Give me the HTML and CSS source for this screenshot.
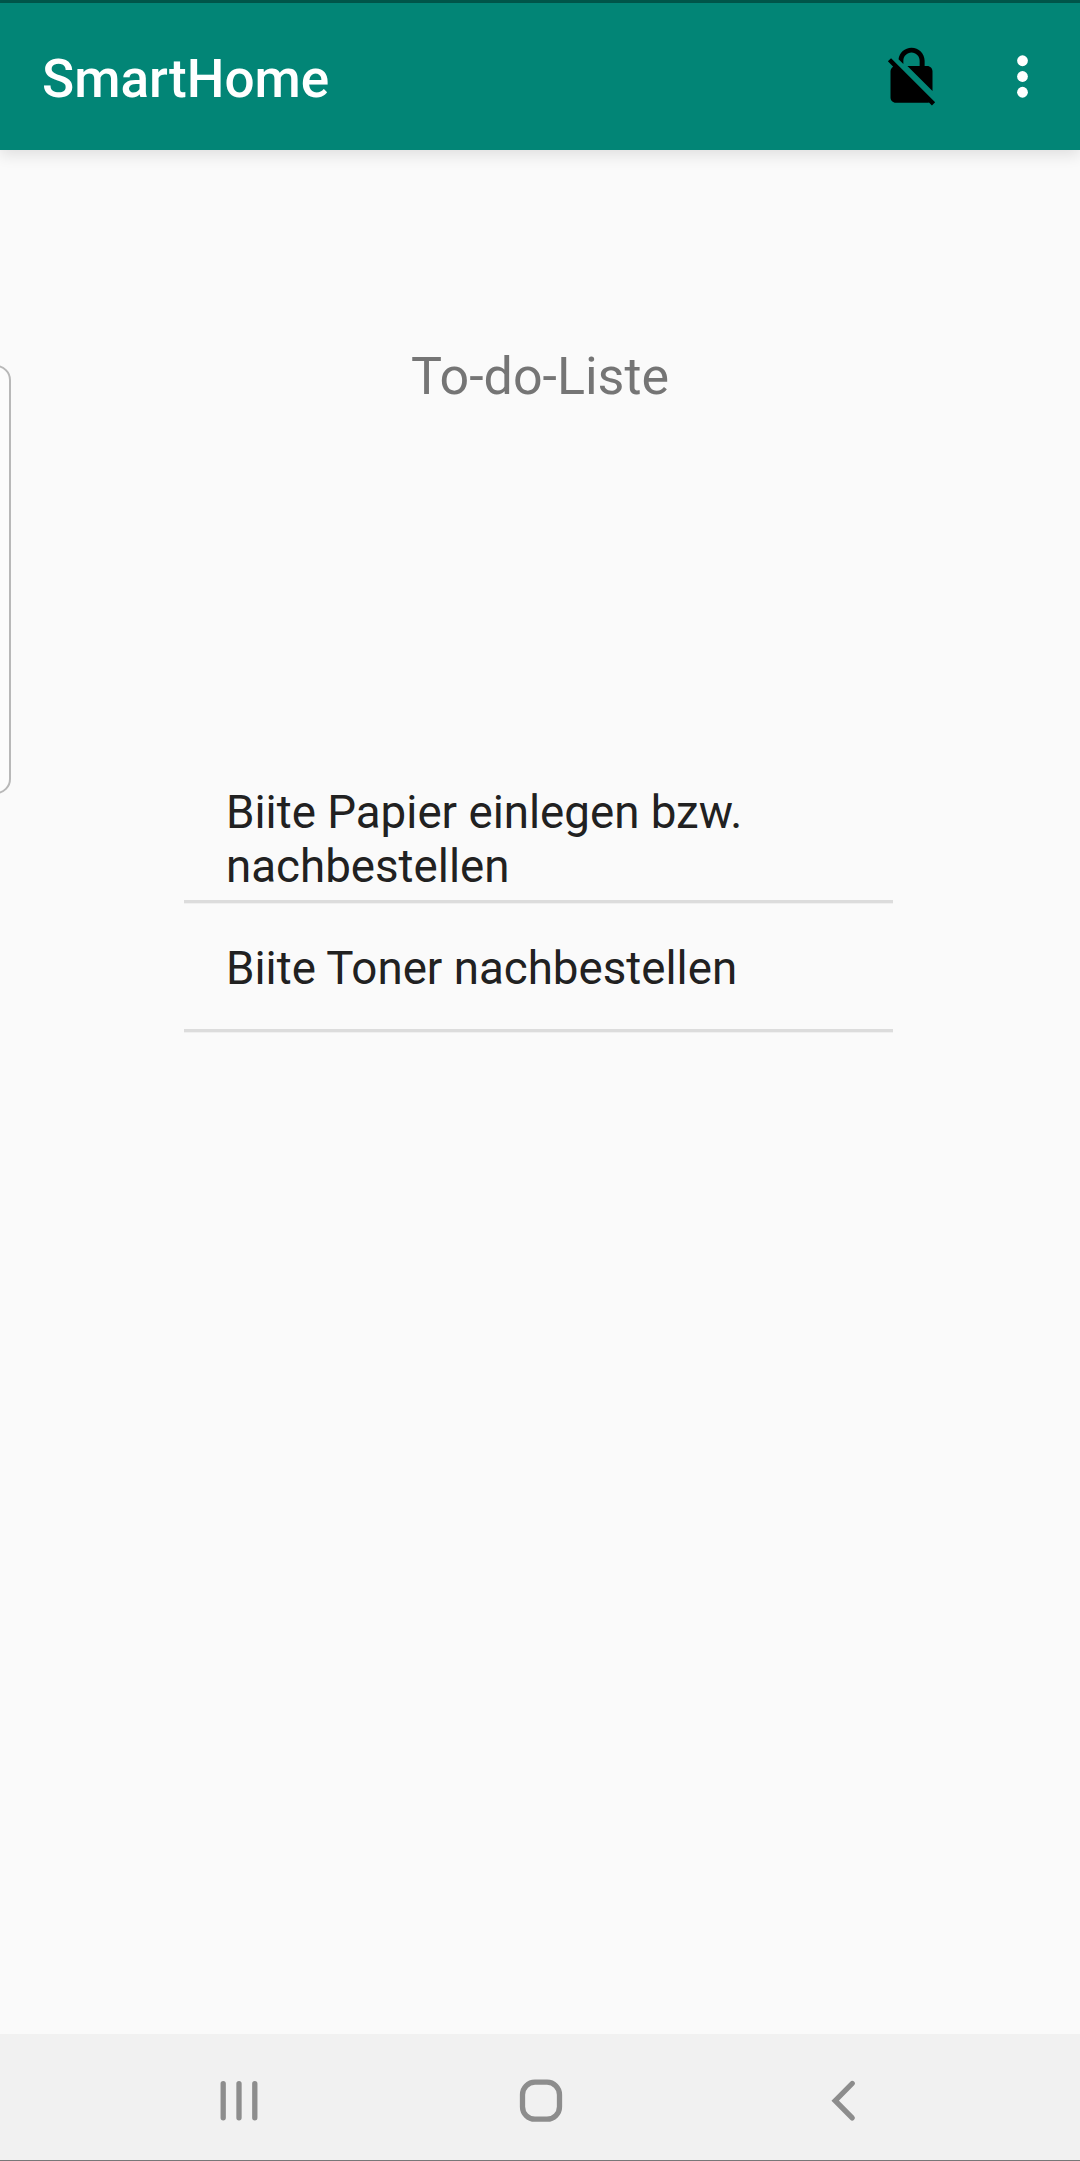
FILE: index.html
```html
<!DOCTYPE html>
<html lang="de">
<head>
<meta charset="utf-8">
<title>SmartHome</title>
<link rel="stylesheet" href="styles.css">
</head>
<body>
<div class="screen">
  <div class="status-strip"></div>
  <header class="app-bar">
    <h1 class="app-title">SmartHome</h1>
    <svg class="icon icon-lock" viewBox="0 0 24 24"><path d="M21 21.78L4.22 5 3 6.22l2.04 2.04C4.42 8.6 4 9.25 4 10v10c0 1.1.9 2 2 2h12c.23 0 .45-.05.66-.12L19.78 23 21 21.78zM8.9 6c0-1.71 1.39-3.1 3.1-3.1s3.1 1.39 3.1 3.1v2h-4.66L20 17.56V10c0-1.1-.9-2-2-2h-1V6c0-2.76-2.24-5-5-5-2.56 0-4.64 1.93-4.94 4.4L8.9 7.24V6z"/></svg>
    <svg class="icon icon-more" viewBox="0 0 24 24"><circle cx="12" cy="6" r="2.05"/><circle cx="12" cy="12" r="2.05"/><circle cx="12" cy="18" r="2.05"/></svg>
  </header>
  <main class="content">
    <h2 class="heading">To-do-Liste</h2>
    <ul class="todo">
      <li class="todo-item">Biite Papier einlegen bzw. nachbestellen</li>
      <li class="todo-item">Biite Toner nachbestellen</li>
    </ul>
  </main>
  <nav class="nav-bar">
    <svg class="nav-icon" viewBox="0 0 48 48"><path d="M8.2 6.6v34.2M24 6.6v34.2M39.8 6.6v34.2"/></svg>
    <svg class="nav-icon" viewBox="0 0 48 48"><rect x="5.5" y="5.2" width="37" height="37" rx="12.5"/></svg>
    <svg class="nav-icon" viewBox="0 0 48 48"><path d="M33.2 6.5L16.2 23.7l17 17.2"/></svg>
  </nav>
  <div class="edge-handle"></div>
</div>
</body>
</html>
```
FILE: styles.css
```css
* { box-sizing: border-box; }

body {
  margin: 0;
  background: #fafafa;
  font-family: Roboto, "Liberation Sans", sans-serif;
}

.screen {
  position: relative;
  display: flex;
  flex-direction: column;
  height: 2161px;
  overflow: hidden;
}

.status-strip {
  height: 3px;
  background: #00574b;
}

.app-bar {
  display: flex;
  align-items: center;
  height: 147px;
  padding: 0 26px 0 42px;
  background: #028576;
  box-shadow: 0 5px 14px rgba(0, 0, 0, 0.11);
}

.app-title {
  flex: 1;
  margin: 5px 0 0;
  color: #fff;
  font-size: 53.1px;
  font-weight: 500;
  line-height: 62px;
}

.icon {
  width: 63px;
  height: 63px;
}

.icon-lock {
  margin: 0 48px 1px 0;
  fill: #000;
}

.icon-more { fill: #fff; }

.content {
  flex: 1;
  display: flex;
  flex-direction: column;
  align-items: center;
}

.heading {
  margin: 196px 0 0;
  color: #757575;
  font-size: 52px;
  font-weight: 400;
  line-height: 62px;
}

.todo {
  align-self: flex-start;
  width: 709px;
  margin: 366px 0 0 184px;
  padding: 0;
  list-style: none;
}

.todo-item {
  display: flex;
  align-items: center;
  height: 129px;
  padding: 5px 42px 0;
  border-bottom: 3px solid #dcdcdc;
  box-shadow: 0 1px 0 #f0f0f0;
  color: #212121;
  font-size: 45.7px;
  line-height: 54px;
}

.nav-bar {
  display: flex;
  justify-content: center;
  gap: 254px;
  height: 127px;
  padding-top: 43px;
  padding-left: 2px;
  border-bottom: 1px solid #777;
  background: #f1f1f1;
}

.nav-icon {
  width: 48px;
  height: 48px;
  fill: none;
  stroke: #8d8d8d;
  stroke-width: 5.3;
  stroke-linecap: round;
}

/* Edge panel handle, sticking in from the left side */
.edge-handle {
  position: absolute;
  top: 365px;
  left: -30px;
  width: 41px;
  height: 429px;
  border: 2px solid #b8b8b8;
  border-radius: 15px;
  background: #fcfcfc;
}
```
